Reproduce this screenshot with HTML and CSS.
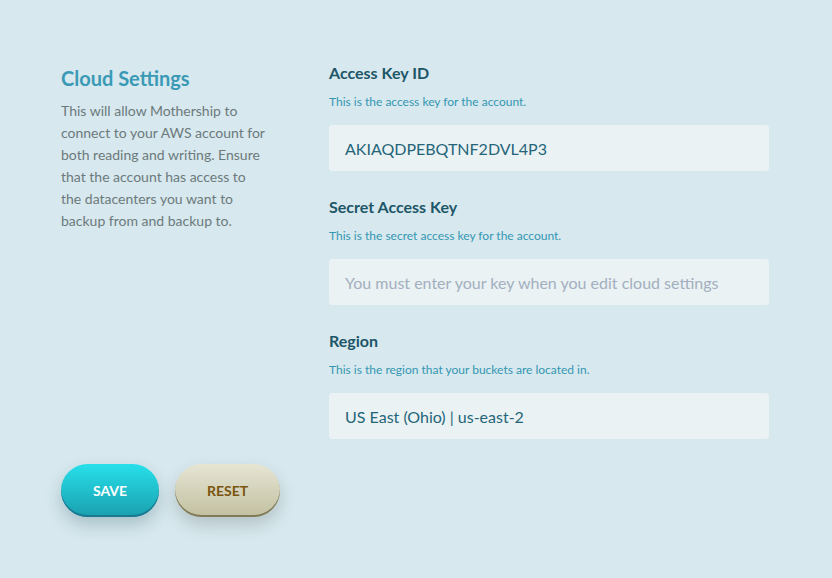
FILE: index.html
```html
<!DOCTYPE html>
<html lang="en">
<head>
<meta charset="utf-8">
<title>Cloud Settings</title>
<link rel="stylesheet" href="styles.css">
</head>
<body>
<main class="page">
  <aside class="side">
    <section class="intro">
      <h1 class="title">Cloud Settings</h1>
      <p class="desc">This will allow Mothership to connect to your AWS account for both reading and writing. Ensure that the account has access to the datacenters you want to backup from and backup to.</p>
    </section>
    <div class="actions">
      <button class="btn btn-save" type="button">SAVE</button>
      <button class="btn btn-reset" type="button">RESET</button>
    </div>
  </aside>
  <form class="fields">
    <div class="field">
      <label class="label">Access Key ID</label>
      <p class="hint">This is the access key for the account.</p>
      <div class="input">AKIAQDPEBQTNF2DVL4P3</div>
    </div>
    <div class="field">
      <label class="label">Secret Access Key</label>
      <p class="hint">This is the secret access key for the account.</p>
      <div class="input placeholder">You must enter your key when you edit cloud settings</div>
    </div>
    <div class="field">
      <label class="label">Region</label>
      <p class="hint">This is the region that your buckets are located in.</p>
      <div class="input">US East (Ohio) | us-east-2</div>
    </div>
  </form>
</main>
</body>
</html>
```

FILE: styles.css
```css
* { box-sizing: border-box; }
html, body {
  margin: 0;
  padding: 0;
  background: #d7e8ee;
  font-family: Lato, "Open Sans", "Liberation Sans", sans-serif;
}
.page {
  width: 832px;
  height: 578px;
  padding: 63px 63px 0 61px;
  display: grid;
  grid-template-columns: 212px 440px;
  column-gap: 56px;
  align-items: start;
}
.side {
  display: flex;
  flex-direction: column;
}
.title {
  margin: 2px 0 0;
  font-size: 20px;
  line-height: 26px;
  font-weight: 700;
  color: #3a9ab6;
}
.desc {
  width: 206px;
  margin: 9px 0 0;
  font-size: 14px;
  line-height: 22px;
  color: #6c7a7c;
}
.actions {
  margin-top: 232px;
  display: flex;
  gap: 16px;
}
.fields {
  margin: 0;
  display: flex;
  flex-direction: column;
  gap: 26px;
}
.field { display: flex; flex-direction: column; }
.label {
  font-size: 16px;
  line-height: 20px;
  font-weight: 700;
  color: #1d5668;
}
.hint {
  margin: 10px 0 0;
  font-size: 12px;
  line-height: 17px;
  color: #3497b2;
}
.input {
  margin-top: 15px;
  height: 46px;
  padding: 0 16px;
  display: flex;
  align-items: center;
  background: #eaf2f4;
  border-radius: 3px;
  font-size: 16px;
  color: #256579;
}
.input.placeholder { color: #a3afbe; }
.btn {
  flex: none;
  height: 53px;
  border: none;
  border-radius: 27px;
  font-family: Lato, "Open Sans", "Liberation Sans", sans-serif;
  font-size: 14px;
  font-weight: 700;
  padding: 0;
  cursor: pointer;
}
.btn-save {
  width: 98px;
  color: #ffffff;
  background: linear-gradient(#27e0ea, #1a9fae);
  box-shadow: inset 0 -2px 0 #1a7890, 0 8px 16px rgba(30, 80, 90, 0.25);
}
.btn-reset {
  width: 105px;
  color: #7a5510;
  background: linear-gradient(#e6e5d4, #c2c0a0);
  box-shadow: inset 0 -2px 0 #7f7a58, 0 8px 16px rgba(60, 70, 60, 0.22);
}
```
